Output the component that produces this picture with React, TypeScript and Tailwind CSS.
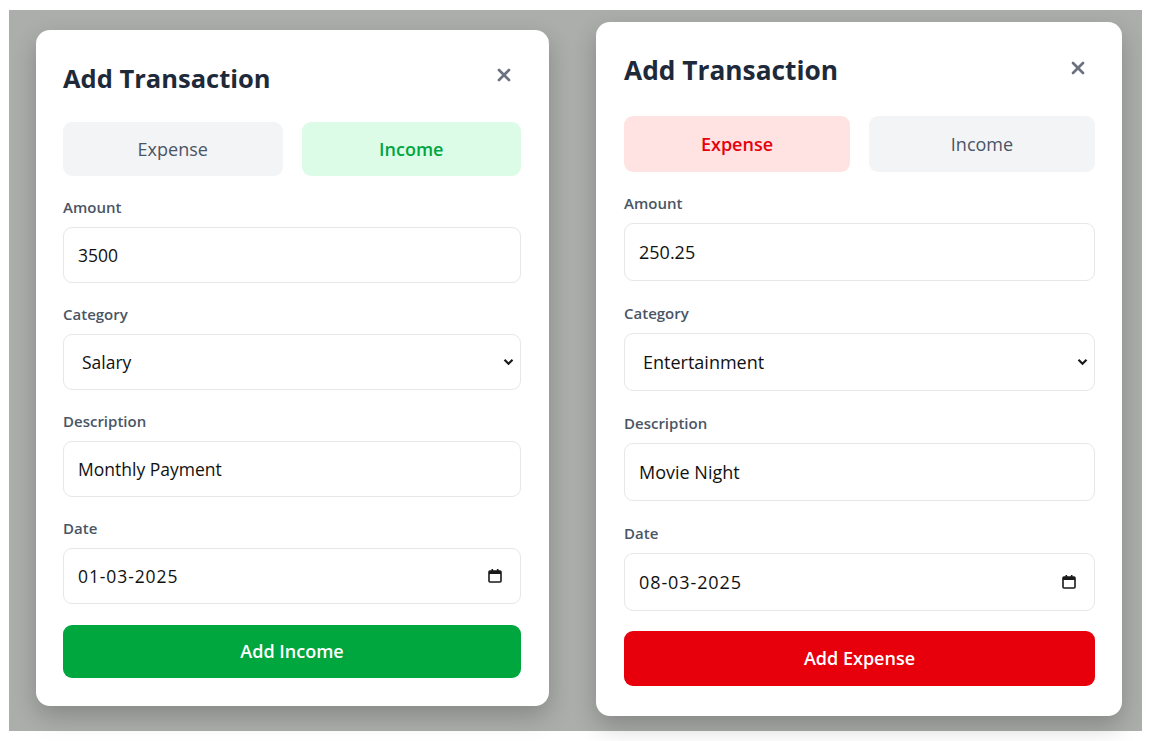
import { X } from 'lucide-react';

type Kind = 'income' | 'expense';

interface CardProps {
  kind: Kind;
  amount: string;
  category: string;
  description: string;
  date: string;
}

function CalendarIcon() {
  return (
    <svg width="16" height="16" viewBox="0 0 16 16" className="text-[#1a1a1a]">
      <rect x="2" y="3" width="12" height="11" rx="1" fill="none" stroke="currentColor" strokeWidth="1.6" />
      <rect x="2" y="3" width="12" height="3" fill="currentColor" />
      <rect x="4.5" y="1" width="1.6" height="3" fill="currentColor" />
      <rect x="9.9" y="1" width="1.6" height="3" fill="currentColor" />
    </svg>
  );
}

function Chevron() {
  return (
    <svg width="11" height="8" viewBox="0 0 11 8">
      <path d="M1.5 1.8 L5.5 5.8 L9.5 1.8" fill="none" stroke="#1a1a1a" strokeWidth="2.2" />
    </svg>
  );
}

function TransactionCard({ kind, amount, category, description, date }: CardProps) {
  const isIncome = kind === 'income';

  // the two shots were taken at slightly different zoom levels
  const s = isIncome
    ? {
        card: 'mt-[20px] ml-[27px] w-[513px] h-[676px] pt-[31px] pl-[27px] pr-[28px]',
        title: 'h-[34px] text-[25.5px]',
        toggles: 'mt-[27px] h-[54px] gap-[19px]',
        label: 'mt-[21px] h-[20px] text-[15px]',
        firstLabel: 'mt-[21px] h-[20px] text-[15px]',
        field: 'mt-[10px] h-[56px] text-[17.5px]',
        button: 'mt-[21px] h-[53px]',
      }
    : {
        card: 'mt-[12px] ml-[18px] w-[526px] h-[694px] pt-[32px] pl-[28px] pr-[27px]',
        title: 'h-[34px] text-[26.3px]',
        toggles: 'mt-[28px] h-[56px] gap-[19px]',
        label: 'mt-[22px] h-[20px] text-[15px]',
        firstLabel: 'mt-[21px] h-[20px] text-[15px]',
        field: 'mt-[10px] h-[58px] text-[18px]',
        button: 'mt-[20px] h-[55px]',
      };

  const label = (text: string, first = false) => (
    <div className={`${first ? s.firstLabel : s.label} flex items-center font-semibold text-[#4a5565]`}>{text}</div>
  );

  return (
    <div className={`${s.card} flex flex-col rounded-[14px] bg-white shadow-[0_10px_25px_rgba(0,0,0,0.22)]`}>
      <div className={`${s.title} flex items-center justify-between`}>
        <h2 className="font-bold text-[#1e2939]">Add Transaction</h2>
        <X size={20} strokeWidth={3.2} className="-mt-[6px] mr-[7px] text-[#6a7282]" />
      </div>

      <div className={`${s.toggles} grid grid-cols-2`}>
        <div
          className={`flex items-center justify-center rounded-[9px] text-[18px] ${
            isIncome ? 'bg-[#f3f4f6] text-[#4a5565]' : 'bg-[#ffe2e2] font-semibold text-[#e7000b]'
          }`}
        >
          Expense
        </div>
        <div
          className={`flex items-center justify-center rounded-[9px] text-[18px] ${
            isIncome ? 'bg-[#dcfce7] font-semibold text-[#00a63e]' : 'bg-[#f3f4f6] text-[#4a5565]'
          }`}
        >
          Income
        </div>
      </div>

      {label('Amount', true)}
      <div className={`${s.field} flex items-center rounded-[9px] border border-[#e5e7eb] px-[14px] text-[#111]`}>{amount}</div>

      {label('Category')}
      <div className={`${s.field} flex items-center justify-between rounded-[9px] border border-[#e5e7eb] pl-[18px] pr-[6px] text-[#111]`}>
        <span>{category}</span>
        <Chevron />
      </div>

      {label('Description')}
      <div className={`${s.field} flex items-center rounded-[9px] border border-[#e5e7eb] px-[14px] text-[#111]`}>{description}</div>

      {label('Date')}
      <div className={`${s.field} flex items-center justify-between rounded-[9px] border border-[#e5e7eb] pl-[14px] pr-[17px] text-[#111]`}>
        <span className="tracking-[0.9px]">{date}</span>
        <CalendarIcon />
      </div>

      <button
        className={`${s.button} flex items-center justify-center rounded-[9px] text-[18px] font-semibold text-white ${
          isIncome ? 'bg-[#00a63e]' : 'bg-[#e7000b]'
        }`}
      >
        {isIncome ? 'Add Income' : 'Add Expense'}
      </button>
    </div>
  );
}

export default function App() {
  return (
    <div className="h-[741px] w-[1152px] overflow-hidden bg-white pt-[10px] pl-[9px] font-['Open_Sans',sans-serif]">
      <div className="flex h-[721px]">
        <div className="w-[569px] bg-[#acaeac]">
          <TransactionCard kind="income" amount="3500" category="Salary" description="Monthly Payment" date="01-03-2025" />
        </div>
        <div className="w-[564px] bg-[#acaeac]">
          <TransactionCard kind="expense" amount="250.25" category="Entertainment" description="Movie Night" date="08-03-2025" />
        </div>
      </div>
    </div>
  );
}
